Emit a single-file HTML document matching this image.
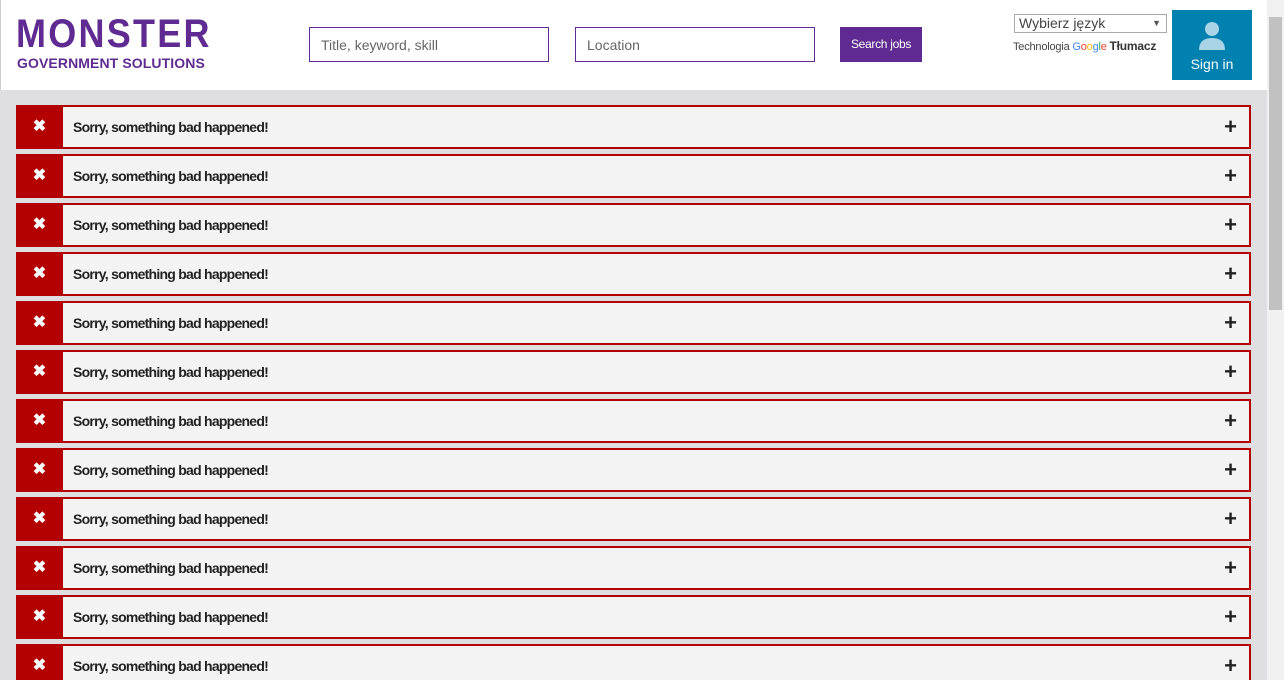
<!DOCTYPE html>
<html style="overflow:hidden;height:680px"><head><style>
*{margin:0;padding:0;box-sizing:border-box}
body{width:1284px;height:680px;overflow:hidden;background:#dfdfe1;font-family:"Liberation Sans",sans-serif;position:relative}
.hdr{position:absolute;left:0;top:0;width:1267px;height:90px;background:#fff;border-left:1px solid #ccc}
.logo1{position:absolute;left:15px;top:14px;font-size:40px;font-weight:bold;color:#5f2a91;line-height:40px;transform:scaleX(0.9);transform-origin:0 0;letter-spacing:2.5px}
.logo2{position:absolute;left:16px;top:55px;font-size:14px;font-weight:bold;color:#5f2a91;line-height:16px;letter-spacing:0.1px}
.in{position:absolute;top:27px;height:35px;border:1px solid #5f2a91;background:#fff;font-size:14px;color:#666;padding:9px 11px}
.btn{position:absolute;left:839px;top:27px;width:82px;height:35px;background:#5f2a91;color:#fff;font-size:12px;text-align:center;line-height:35px;letter-spacing:-0.3px}
.sel{position:absolute;left:1013px;top:14px;width:153px;height:19px;border:1px solid #aaa;font-size:14px;color:#444;padding:0 4px;line-height:17px}
.sel span{position:absolute;right:5px;top:0;font-size:9px;color:#555}
.tr{position:absolute;left:1012px;top:39px;font-size:11px;color:#444;letter-spacing:-0.2px}
.sign{position:absolute;left:1171px;top:10px;width:80px;height:70px;background:#0081b0;color:#fff;font-size:14px;text-align:center}
.row{position:absolute;left:16px;width:1235px;height:44px;border:2px solid #b30000;background:#f3f3f3}
.row .x{position:absolute;left:-2px;top:-2px;width:47px;height:44px;background:#b30000;color:#fff;font-size:16px;font-weight:bold;text-align:center;line-height:44px}
.row .t{position:absolute;left:55px;top:0;line-height:40px;font-size:14px;font-weight:bold;color:#222;letter-spacing:-0.75px}
.row .p{position:absolute;right:12px;top:0;line-height:40px;font-size:22px;font-weight:bold;color:#222}
.sb{position:absolute;left:1267px;top:0;width:17px;height:680px;background:#f1f1f1}
.th{position:absolute;left:1269px;top:17px;width:13px;height:293px;background:#c1c1c1}
</style></head><body>
<div class="hdr">
<div class="logo1">MONSTER</div>
<div class="logo2">GOVERNMENT SOLUTIONS</div>
<div class="in" style="left:308px;width:240px">Title, keyword, skill</div>
<div class="in" style="left:574px;width:240px">Location</div>
<div class="btn">Search jobs</div>
<div class="sel">Wybierz język<span>▼</span></div>
<div class="tr">Technologia <span style="color:#4285f4">G</span><span style="color:#ea4335">o</span><span style="color:#fbbc05">o</span><span style="color:#4285f4">g</span><span style="color:#34a853">l</span><span style="color:#ea4335">e</span> <b style="font-size:12px;color:#333">Tłumacz</b></div>
<div class="sign"><svg width="30" height="30" viewBox="0 0 30 30" style="margin-top:10px"><circle cx="15" cy="9" r="7" fill="#a8d4e6"/><path d="M2 30 Q2 18 15 18 Q28 18 28 30Z" fill="#a8d4e6"/></svg><div style="margin-top:3px">Sign in</div></div>
</div>
<div class="row" style="top:105px"><div class="x">✖</div><div class="t">Sorry, something bad happened!</div><div class="p">+</div></div>
<div class="row" style="top:154px"><div class="x">✖</div><div class="t">Sorry, something bad happened!</div><div class="p">+</div></div>
<div class="row" style="top:203px"><div class="x">✖</div><div class="t">Sorry, something bad happened!</div><div class="p">+</div></div>
<div class="row" style="top:252px"><div class="x">✖</div><div class="t">Sorry, something bad happened!</div><div class="p">+</div></div>
<div class="row" style="top:301px"><div class="x">✖</div><div class="t">Sorry, something bad happened!</div><div class="p">+</div></div>
<div class="row" style="top:350px"><div class="x">✖</div><div class="t">Sorry, something bad happened!</div><div class="p">+</div></div>
<div class="row" style="top:399px"><div class="x">✖</div><div class="t">Sorry, something bad happened!</div><div class="p">+</div></div>
<div class="row" style="top:448px"><div class="x">✖</div><div class="t">Sorry, something bad happened!</div><div class="p">+</div></div>
<div class="row" style="top:497px"><div class="x">✖</div><div class="t">Sorry, something bad happened!</div><div class="p">+</div></div>
<div class="row" style="top:546px"><div class="x">✖</div><div class="t">Sorry, something bad happened!</div><div class="p">+</div></div>
<div class="row" style="top:595px"><div class="x">✖</div><div class="t">Sorry, something bad happened!</div><div class="p">+</div></div>
<div class="row" style="top:644px"><div class="x">✖</div><div class="t">Sorry, something bad happened!</div><div class="p">+</div></div>
<div class="sb"></div><div class="th"></div>
</body></html>
